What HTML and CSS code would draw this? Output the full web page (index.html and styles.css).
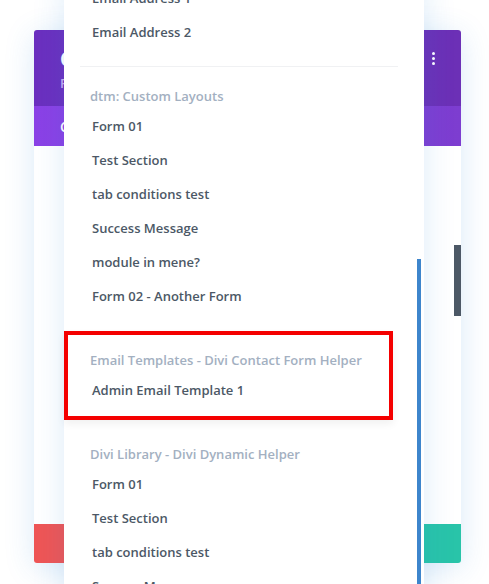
FILE: index.html
```html
<!DOCTYPE html>
<html lang="en">
<head>
    <meta charset="UTF-8">
    <meta name="viewport" content="width=device-width, initial-scale=1.0">
    <title>Layout Picker</title>
    <link rel="stylesheet" href="styles.css">
</head>
<body>

<div class="stage">
    <div class="card">
        <div class="card-head">
            <div class="card-titles">
                <div class="card-title">Contact Form Settings</div>
                <div class="card-sub">Preset: Default</div>
            </div>
            <div class="card-more">
                <span></span><span></span><span></span>
            </div>
        </div>
        <div class="card-tabs">
            <span class="tab">Content</span>
        </div>
        <div class="card-body">
            <div class="card-scroll"></div>
        </div>
        <div class="card-foot">
            <div class="btn btn-red"></div>
            <div class="btn btn-blue"></div>
            <div class="btn btn-green"></div>
        </div>
    </div>

    <div class="menu">
        <div class="menu-thumb"></div>

        <div class="group">
            <div class="item">Email Address 1</div>
            <div class="item">Email Address 2</div>
        </div>

        <div class="group">
            <div class="sep line"></div>
            <div class="group-title">dtm: Custom Layouts</div>
            <div class="item">Form 01</div>
            <div class="item">Test Section</div>
            <div class="item">tab conditions test</div>
            <div class="item">Success Message</div>
            <div class="item">module in mene?</div>
            <div class="item">Form 02 - Another Form</div>
        </div>

        <div class="group">
            <div class="highlight"></div>
            <div class="sep"></div>
            <div class="group-title">Email Templates - Divi Contact Form Helper</div>
            <div class="item">Admin Email Template 1</div>
        </div>

        <div class="group">
            <div class="sep"></div>
            <div class="group-title">Divi Library - Divi Dynamic Helper</div>
            <div class="item">Form 01</div>
            <div class="item">Test Section</div>
            <div class="item">tab conditions test</div>
            <div class="item">Success Message</div>
        </div>
    </div>
</div>

</body>
</html>
```

FILE: styles.css
```css
body {
    margin: 0;
    padding: 0;
    background: #fff;
    font-family: "Open Sans", "Noto Sans", sans-serif;
}
.stage {
    position: relative;
    width: 489px;
    height: 584px;
    overflow: hidden;
}

/* background settings card */
.card {
    margin: 30px 0 0 34px;
    width: 427px;
    height: 533px;
    display: flex;
    flex-direction: column;
    border-radius: 3px;
    box-shadow: 0 5px 30px rgba(43, 135, 218, 0.18);
    background: #fff;
}
.card-head {
    height: 76px;
    display: flex;
    justify-content: space-between;
    padding: 0 26px 0 26px;
    background: linear-gradient(90deg, #6b2fbf, #6c30b6);
    border-radius: 3px 3px 0 0;
}
.card-titles {
    padding-top: 17px;
}
.card-title {
    color: #fff;
    font-size: 19px;
    font-weight: 700;
    line-height: 24px;
}
.card-sub {
    color: #c7acf2;
    font-size: 13px;
    font-weight: 600;
    line-height: 18px;
    margin-top: 3px;
}
.card-more {
    display: flex;
    flex-direction: column;
    gap: 2px;
    padding-top: 22px;
}
.card-more span {
    width: 3px;
    height: 3px;
    border-radius: 50%;
    background: #fff;
}
.card-tabs {
    height: 40px;
    display: flex;
    align-items: center;
    padding-left: 26px;
    background: linear-gradient(90deg, #8b41e6, #7d3dd0);
}
.tab {
    color: #fff;
    font-size: 14px;
    font-weight: 600;
}
.card-body {
    flex: 1;
    display: flex;
    justify-content: flex-end;
}
.card-scroll {
    width: 7px;
    height: 71px;
    margin-top: 99px;
    background: #4c5866;
}
.card-foot {
    height: 39px;
    display: grid;
    grid-template-columns: 1fr 1fr 1fr;
}
.btn-red {
    background: #ef5555;
    border-radius: 0 0 0 3px;
}
.btn-blue {
    background: #2b87da;
}
.btn-green {
    background: #29c4a9;
    border-radius: 0 0 3px 0;
}

/* dropdown over the card */
.menu {
    position: absolute;
    left: 64px;
    top: -19px;
    width: 360px;
    height: 640px;
    background: #fff;
    box-shadow: 0 0 30px rgba(43, 135, 218, 0.16);
}
.menu-thumb {
    position: absolute;
    right: 3px;
    top: 278px;
    width: 4px;
    height: 400px;
    background: #3d85cc;
}
.group {
    position: relative;
}
.sep {
    height: 34px;
}
.sep.line {
    height: 1px;
    margin: 17px 26px 16px 16px;
    background: #f0f1f3;
}
.group-title {
    height: 26px;
    line-height: 26px;
    padding-left: 26px;
    color: #a3b0c1;
    font-size: 13px;
    font-weight: 600;
}
.item {
    height: 34px;
    line-height: 34px;
    padding-left: 28px;
    color: #4c5866;
    font-size: 13px;
    font-weight: 550;
}
.highlight {
    position: absolute;
    left: 0;
    top: 18px;
    width: 321px;
    height: 81px;
    border: 4px solid #f40000;
    box-shadow: 0 4px 8px rgba(0, 0, 0, 0.06);
}
```
